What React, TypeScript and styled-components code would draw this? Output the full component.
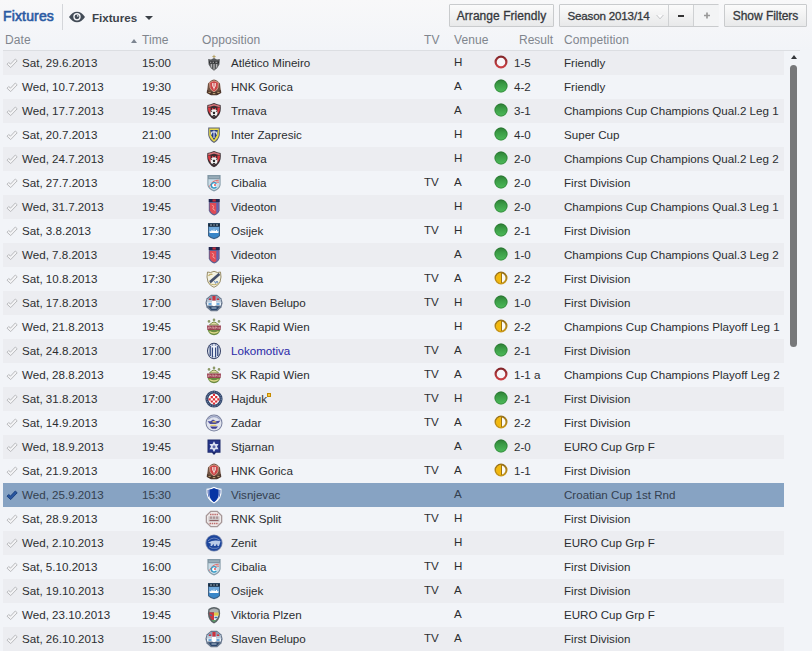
import React, { useState } from 'react';
import styled, { createGlobalStyle } from 'styled-components';

type Outcome = 'win' | 'draw' | 'loss';

interface Fixture {
  date: string;
  time: string;
  team: string;
  venue: 'H' | 'A';
  competition: string;
  tv?: boolean;
  outcome?: Outcome;
  score?: string;
}

interface LabelProps {
  spacing?: number;
}

const QUAL = 'Champions Cup Champions Qual.';
const PLAYOFF = 'Champions Cup Champions Playoff Leg ';
const LEAGUE = 'First Division';
const EURO = 'EURO Cup Grp F';

const fixtures: Fixture[] = [
  { date: 'Sat, 29.6.2013', time: '15:00', team: 'Atlético Mineiro', venue: 'H', outcome: 'loss', score: '1-5', competition: 'Friendly' },
  { date: 'Wed, 10.7.2013', time: '19:30', team: 'HNK Gorica', venue: 'A', outcome: 'win', score: '4-2', competition: 'Friendly' },
  { date: 'Wed, 17.7.2013', time: '19:45', team: 'Trnava', venue: 'A', outcome: 'win', score: '3-1', competition: `${QUAL}2 Leg 1` },
  { date: 'Sat, 20.7.2013', time: '21:00', team: 'Inter Zapresic', venue: 'H', outcome: 'win', score: '4-0', competition: 'Super Cup' },
  { date: 'Wed, 24.7.2013', time: '19:45', team: 'Trnava', venue: 'H', outcome: 'win', score: '2-0', competition: `${QUAL}2 Leg 2` },
  { date: 'Sat, 27.7.2013', time: '18:00', team: 'Cibalia', tv: true, venue: 'A', outcome: 'win', score: '2-0', competition: LEAGUE },
  { date: 'Wed, 31.7.2013', time: '19:45', team: 'Videoton', venue: 'H', outcome: 'win', score: '2-0', competition: `${QUAL}3 Leg 1` },
  { date: 'Sat, 3.8.2013', time: '17:30', team: 'Osijek', tv: true, venue: 'H', outcome: 'win', score: '2-1', competition: LEAGUE },
  { date: 'Wed, 7.8.2013', time: '19:45', team: 'Videoton', venue: 'A', outcome: 'win', score: '1-0', competition: `${QUAL}3 Leg 2` },
  { date: 'Sat, 10.8.2013', time: '17:30', team: 'Rijeka', tv: true, venue: 'A', outcome: 'draw', score: '2-2', competition: LEAGUE },
  { date: 'Sat, 17.8.2013', time: '17:00', team: 'Slaven Belupo', tv: true, venue: 'H', outcome: 'win', score: '1-0', competition: LEAGUE },
  { date: 'Wed, 21.8.2013', time: '19:45', team: 'SK Rapid Wien', venue: 'H', outcome: 'draw', score: '2-2', competition: `${PLAYOFF}1` },
  { date: 'Sat, 24.8.2013', time: '17:00', team: 'Lokomotiva', tv: true, venue: 'A', outcome: 'win', score: '2-1', competition: LEAGUE },
  { date: 'Wed, 28.8.2013', time: '19:45', team: 'SK Rapid Wien', tv: true, venue: 'A', outcome: 'loss', score: '1-1 a', competition: `${PLAYOFF}2` },
  { date: 'Sat, 31.8.2013', time: '17:00', team: 'Hajduk', tv: true, venue: 'H', outcome: 'win', score: '2-1', competition: LEAGUE },
  { date: 'Sat, 14.9.2013', time: '16:30', team: 'Zadar', tv: true, venue: 'A', outcome: 'draw', score: '2-2', competition: LEAGUE },
  { date: 'Wed, 18.9.2013', time: '19:45', team: 'Stjarnan', venue: 'A', outcome: 'win', score: '2-0', competition: EURO },
  { date: 'Sat, 21.9.2013', time: '16:00', team: 'HNK Gorica', tv: true, venue: 'A', outcome: 'draw', score: '1-1', competition: LEAGUE },
  { date: 'Wed, 25.9.2013', time: '15:30', team: 'Visnjevac', venue: 'A', competition: 'Croatian Cup 1st Rnd' },
  { date: 'Sat, 28.9.2013', time: '16:00', team: 'RNK Split', tv: true, venue: 'H', competition: LEAGUE },
  { date: 'Wed, 2.10.2013', time: '19:45', team: 'Zenit', venue: 'H', competition: EURO },
  { date: 'Sat, 5.10.2013', time: '16:00', team: 'Cibalia', tv: true, venue: 'H', competition: LEAGUE },
  { date: 'Sat, 19.10.2013', time: '15:30', team: 'Osijek', tv: true, venue: 'A', competition: LEAGUE },
  { date: 'Wed, 23.10.2013', time: '19:45', team: 'Viktoria Plzen', venue: 'A', competition: EURO },
  { date: 'Sat, 26.10.2013', time: '15:00', team: 'Slaven Belupo', tv: true, venue: 'A', competition: LEAGUE }
];

const SHIELD = 'M3 2 Q9 3.5 15 2 V9 Q15 15 9 17 Q3 15 3 9Z';

const crests: Record<string, React.ReactNode> = {
  'Atlético Mineiro': (
    <>
      <path d="M9 .5 9.7 2 11 2.2 10 3.2 9 4 8 3.2 7 2.2 8.3 2Z" fill="#b5a266" />
      <path d="M3.2 5 6 5.4 9 4 12 5.4 14.8 5 14.4 10.5 Q12.5 15 9 16.7 Q5.5 15 3.6 10.5Z" fill="#555759" />
      <path d="M4 7.4h10v2H4z" fill="#2c2d2f" />
      <path d="M5 8.3h1.4M7.6 8.3H9M10.4 8.3h2" stroke="#bbb" strokeWidth=".9" />
      <path d="M6.3 10v3.6M9 10v5.6M11.7 10v3.6" stroke="#c9c9c9" strokeWidth="1" />
    </>
  ),
  'HNK Gorica': (
    <>
      <path d="M5.5 3 Q9 0 12.5 3 L15 5.5 15.5 10 16.2 14.5 12 17 6 17 1.8 14.5 2.5 10 3 5.500Z" fill="#6f5040" />
      <path d="M2 12 5 13.500 13 13.500 16 12 16.200 15 12 17.300 6 17.300 1.800 15Z" fill="#4d372c" />
      <path d="M4.600 4.500 9 2.800 13.400 4.500 13 9.500 Q12 12.500 9 13.800 Q6 12.500 5 9.500Z" fill="#cc4447" stroke="#dcae98" strokeWidth=".8" />
      <path d="M7.6 5v3L9 10l1.400-2V5M9 5v6.500" stroke="#f4e4e1" strokeWidth=".9" fill="none" />
      <path d="M3.500 14.400h2.200M7.800 15.600h2.500M12.300 14.400h2.200" stroke="#c2a477" strokeWidth="1" />
    </>
  ),
  Trnava: (
    <>
      <path d="M2.4 3 5 2.4 9 1 13 2.4 15.6 3 Q16.4 9 14 13 Q12 16 9 17.3 Q6 16 4 13 Q1.6 9 2.4 3Z" fill="#3a2d31" />
      <path d="M2.900 5.500h2.700v7.300Q2.600 9 2.900 5.500ZM12.400 5.500h2.700q.3 4-2.700 7.300zM7 6h1.300v2H7zM9.800 6h1.300v2H9.800z" fill="#de3a42" />
      <path d="M3.200 4.600 9 2.800l5.800 1.800" stroke="#d8757a" strokeWidth="1.600" fill="none" />
      <circle cx="9" cy="10.800" r="3.500" fill="#f4f4f4" />
      <path d="m9 9.500 1.300 1-.5 1.500H8.200l-.5-1.500ZM6 8.800l1.300.3L6.300 10.300ZM12 8.800l-1.300.3 1 1.200ZM7.300 13.200l1.700-.5 1.700.5-1.700 1.100Z" fill="#222" />
    </>
  ),
  'Inter Zapresic': (
    <>
      <path d="M3.2 1.5h11.6V9Q14 14 9 17Q4 14 3.2 9Z" fill="#5d6375" />
      <path d="M4.2 2.5h9.6V9Q13 13 9 15.7Q5 13 4.2 9Z" fill="#e9db49" />
      <path d="M5.2 4h7.6L12 9l-3 5-3-5Z" fill="#263b82" />
      <path d="M9 4.5v7.500M6.500 6h5M6.800 6l-.3 2.500M11.200 6l.3 2.500" stroke="#f2f4ff" strokeWidth="1" />
    </>
  ),
  Cibalia: (
    <>
      <path d="M2.4 1h13.2v10Q15 15 9 17.5Q3 15 2.4 11Z" fill="#8298a6" />
      <path d="M3.4 5.2h11.2V11Q14 14.2 9 16.3Q4 14.2 3.4 11Z" fill="#c9dce7" />
      <path d="M4 3.1h10" stroke="#a9bcc6" strokeWidth="1" />
      <path d="M13.8 6.2Q7 6 4.500 12.6M14 8.2Q9 7 6.500 13.8" stroke="#e66c69" strokeWidth="1" fill="none" />
      <path d="M11.300 9.800A2.700 2.700 0 1 0 11.300 12.800" fill="#fff" stroke="#319cc8" strokeWidth="1.4" />
      <circle cx="10" cy="11" r="1" fill="#df555a" />
    </>
  ),
  Videoton: (
    <>
      <path d="M3.800 1h10.800v11.5Q13.4 16 9.2 17.5Q5 16 3.800 12.5Z" fill="#5c6091" />
      <path d="M3.800 1h10.800v3H3.800z" fill="#20284f" />
      <path d="M7.5 1.4h3.3v2.2H7.5z" fill="#c22b39" />
      <path d="M4.800 5h8.800v7.3q-1 2.9-4.4 4Q5.800 15.2 4.800 12.3Z" fill="#e04a55" />
      <path d="M11.300 4.8h2.300v7.5q-.7 1.800-2.300 2.900Z" fill="#5d66b5" />
      <path d="m6.800 7 2 1.200L7.800 11l2.400 1.5" stroke="#f29b97" strokeWidth="1" fill="none" />
    </>
  ),
  Osijek: (
    <>
      <path d="M3 1h12v13q-2 2.2-6 3.2Q5 16.2 3 14Z" fill="#3d6288" />
      <path d="M4 5h10v5H4z" fill="#6fa9dc" />
      <path d="M4.500 11V9.200h2V8h1v1h1l.5-2.500.5 2.500h1.500V8h1v1.200h1.500V11z" fill="#fff" />
      <path d="M4 11h10v2.6q-2 1.7-5 2.4-3-.7-5-2.4Z" fill="#3a86c8" />
      <path d="M3.200 1.5h11.600v3H3.200z" fill="#1b2c3f" />
      <path d="M5 3h2M8.3 3h1.5M11 3h2" stroke="#a3b8c8" strokeWidth="1" />
    </>
  ),
  Rijeka: (
    <>
      <path d="M2.5 2 5.5 2.5 9 1.3 12.5 2.5 15.5 2 16 7 15 12 Q13 16 9 17.3 Q5 16 3 12 L2 7Z" fill="#f3f1e2" stroke="#998e69" strokeWidth="1" />
      <path d="M13.8 2.8 15.2 5 5.6 13.4 4.2 11Z" fill="#45506b" />
      <path d="M3.5 6Q5 3.5 7.5 4.5" stroke="#c3b272" strokeWidth="1.3" fill="none" />
      <path d="m9.5 11 1.1 2.4L12 11l1 2" stroke="#6387bb" strokeWidth="1" fill="none" />
      <path d="M4 13q5 3.5 10 0" stroke="#c3b272" strokeWidth="1" fill="none" />
    </>
  ),
  'Slaven Belupo': (
    <>
      <path d="m6 .8 6 0 4.5 3.7L17.6 9l-1.2 4.6-4.2 3.6H5.8l-4.2-3.6L.4 9l1.1-4.5Z" fill="#68778d" />
      <path d="M6.2 2h5.6l3.8 3.3L16.5 9H1.5l.9-3.7Z" fill="#bac8d7" />
      <path d="M3 4.5 6 2h1.5v4H3zM10.5 2H12l3 2.5V6h-4.5z" fill="#8c9db5" />
      <path d="M7.4 2h3.2v4.5H7.4zM4 4.6h2v1.5H4zM12 4.6h2v1.5h-2z" fill="#cc3340" />
      <path d="M2 8.5h14v3H2z" fill="#e9f1f8" />
      <path d="M3.5 10h3M11.5 10h3" stroke="#4390cf" strokeWidth="1.3" />
      <path d="M7 7h4v4q-2 2.5-4 0z" fill="#fff" />
      <path d="M3.5 12.5h11l-2.8 3.6H6.3z" fill="#29476f" />
      <path d="M6.5 14h5" stroke="#d7e0ea" strokeWidth=".9" />
    </>
  ),
  'SK Rapid Wien': (
    <>
      <circle cx="4" cy="3.4" r="1.3" fill="#8d9a68" />
      <circle cx="9" cy="1.9" r="1.3" fill="#8d9a68" />
      <circle cx="14" cy="3.4" r="1.3" fill="#8d9a68" />
      <path d="M4.500 7Q9 1 13.500 7Z" fill="#e2daa6" stroke="#7c8f4b" strokeWidth="1" />
      <path d="M2.500 11.500h13Q14 17 9 17.3 4 17 2.500 11.500Z" fill="#6a8b40" />
      <path d="M4.500 13.500q4.500 3 9 0" stroke="#e0d98a" strokeWidth="1.3" fill="none" />
      <path d="M2 7.500h14l-.4 4.600H2.400z" fill="#9a4152" />
      <path d="M3.5 11V9h2v1H4M7 11V9h1.6v2M10 11.3V9h1.500v1H10M13 9v2M14.4 9v2" stroke="#dba8ac" strokeWidth=".7" fill="none" />
    </>
  ),
  Lokomotiva: (
    <>
      <ellipse cx="9" cy="9" rx="7" ry="8.3" fill="#303c61" />
      <ellipse cx="9" cy="9" rx="6" ry="7.3" fill="#dce3ef" />
      <path d="M5.2 4v10M7.5 2.5v13M10.5 2.5v13M12.8 4v10" stroke="#35497f" strokeWidth="1.3" />
      <path d="M8.2 4h1.600v10H8.200zM6.5 3.5h5v2h-5z" fill="#f1f4fa" />
    </>
  ),
  Hajduk: (
    <>
      <circle cx="9" cy="9" r="8.6" fill="#31456b" />
      <circle cx="9" cy="9" r="7.2" fill="none" stroke="#8e9fba" strokeWidth=".9" strokeDasharray="1.2 1.2" />
      <circle cx="9" cy="9" r="5.6" fill="#fff" />
      <path d="M7.9 3.8h2.2V6H7.9zM5.7 6h2.2v2.2H5.7zM10.1 6h2.2v2.2h-2.2zM3.6 8.2h2.1v2.2H3.6zM7.9 8.2h2.2v2.2H7.9zM12.3 8.2h2.1v2.2h-2.1zM5.7 10.4h2.2v2.2H5.7zM10.1 10.4h2.2v2.2h-2.2zM7.9 12.6h2.2v1.8H7.9z" fill="#dc2f35" />
    </>
  ),
  Zadar: (
    <>
      <circle cx="9" cy="9" r="8.5" fill="#777f9e" />
      <circle cx="9" cy="9" r="7.5" fill="#e1e4ee" />
      <path d="M3 5.2Q9-.2 15 5.2" stroke="#9ba4c4" strokeWidth="1.5" fill="none" />
      <path d="M2.5 7.2h3L8 5.5l3 1.7 4.5-.8-2 2.600-3 1H5z" fill="#4c4d9c" />
      <path d="M7.5 7h3l1 1.5h-4z" fill="#d5b762" />
      <path d="M5 12.6h8l-2 2.2H7z" fill="#3f3f91" />
      <path d="M5.500 11.300h6" stroke="#e3c64e" strokeWidth="1" />
    </>
  ),
  Stjarnan: (
    <>
      <path d="M2.5 1.5h13v13.3H11L9 17l-2-2.200H2.500Z" fill="#1d2a6b" />
      <path d="M3.5 2.5h11v11.3h-11z" fill="#26358a" />
      <path d="m9 3.3 1.5 2.7h3L12 8.6l1.5 2.700h-3L9 14l-1.5-2.700h-3L6 8.6 4.500 6h3Z" fill="#dce2f2" />
      <circle cx="9" cy="8.7" r="1.5" fill="#5d69a8" />
    </>
  ),
  Visnjevac: (
    <>
      <path d="M1.5 2.8Q5.5 2.7 9 .7q3.5 2 7.5 2.1Q17.5 13.5 9 17.6.5 13.5 1.500 2.800Z" fill="#fff" />
      <path d="M2.600 3.700h1V8q.2 4 2.300 6-3.700-3.400-3.300-10.300ZM15.400 3.700h-1V8q-.2 4-2.300 6 3.700-3.400 3.300-10.300Z" fill="#2c4ea8" />
      <path d="M4.300 3.500Q7 3 9 1.900q2 1.100 4.700 1.600V9q-.5 4.300-4.700 7.200Q4.800 13.300 4.300 9Z" fill="#0735a4" />
    </>
  ),
  'RNK Split': (
    <>
      <path d="M5.5.7h7l4.8 4.8v7l-4.8 4.8h-7L.7 12.5v-7Z" fill="#a69798" />
      <path d="M6 2h6l4 4v6l-4 4H6l-4-4V6Z" fill="#eee9e9" />
      <path d="M5 4.5h8M4.5 13.5h9" stroke="#bd6c6c" strokeWidth="1.5" strokeDasharray="1.5 .7" />
      <path d="M3.5 6.3h11v5.5h-11z" fill="#ccc5c6" />
      <path d="M6 6.5v2.3M9 6.500v2.300M12 6.500v2.300M4.500 10.500h9" stroke="#8d6064" strokeWidth="1" />
    </>
  ),
  Zenit: (
    <>
      <circle cx="9" cy="9" r="8.6" fill="#7d8bb0" />
      <circle cx="9" cy="9" r="7.7" fill="#1c459c" />
      <path d="M3 6.8Q9 1.5 14.8 6.4" stroke="#6984c2" strokeWidth="1" fill="none" />
      <path d="M3 8.800Q9 5 15.600 7.300L14 12H12.500L12 9.800 10.500 12H9L8.500 9.800 7 12H5.500L5.800 9.500Z" fill="#b9cbe8" />
      <path d="m4 12.800 3 1.500h5l2-1.500" stroke="#6380bd" strokeWidth="1" fill="none" />
    </>
  ),
  'Viktoria Plzen': (
    <>
      <path d="M3.5 3Q9-.8 14.5 3 16 9 13.5 13.5 11.5 16.8 9 17.6 6.5 16.8 4.5 13.5 2 9 3.5 3Z" fill="#5a6265" />
      <path d="M4.5 4Q9 1 13.5 4v2.2h-9z" fill="#aeb3b5" />
      <path d="M4.500 6.500H9V15Q4 12.500 4.500 6.500Z" fill="#cf3540" />
      <path d="M9 6.500h4.500Q14 12.500 9 15Z" fill="#eef0ee" />
      <path d="M9 6.500h4.500v3.200H9z" fill="#e0c748" />
      <path d="m5 8.500 2 1.200M9.500 11.500h3" stroke="#3b74a5" strokeWidth="1.300" />
      <path d="M6.500 14h5L9 16.300Z" fill="#5c9c68" />
    </>
  )
};

const Crest = ({ team }: { team: string }) => (
  <CrestSvg viewBox="0 0 18 18">{crests[team] ?? <path d={SHIELD} fill="#777" />}</CrestSvg>
);

const Tick = ({ active }: { active: boolean }) => (
  <TickSvg viewBox="0 0 12 12">
    <path
      d="M1 7.200 2.700 5.500 4.500 7.100 9.300 2 11.200 3.800 4.700 10.600Z"
      fill={active ? '#2856a0' : '#f4f4f6'}
      stroke={active ? '#1d427f' : '#b9babd'}
      strokeWidth="1"
      strokeLinejoin="round"
    />
  </TickSvg>
);

const ResultIcon = ({ outcome }: { outcome: Outcome }) => (
  <ResultSvg viewBox="0 0 14 14">
    {outcome === 'win' && (
      <>
        <circle cx="7" cy="7" r="6.5" fill="url(#win)" />
        <circle cx="7" cy="7" r="6.1" fill="none" stroke="#256b2d" strokeOpacity=".6" strokeWidth=".8" />
      </>
    )}
    {outcome === 'draw' && (
      <>
        <circle cx="7" cy="7" r="5.5" fill="#fbfaf5" stroke="url(#draw)" strokeWidth="2" />
        <path d="M7.4 1.8v10.400A5.200 5.200 0 0 1 7 1.800Z" fill="#f3b90e" />
        <path d="M7.5 2v10" stroke="#9d7512" strokeWidth="1" />
      </>
    )}
    {outcome === 'loss' && <circle cx="7" cy="7" r="5.400" fill="#f7f6f9" stroke="url(#loss)" strokeWidth="2.200" />}
  </ResultSvg>
);

function App() {
  const [selected, setSelected] = useState(18);

  return (
    <Page>
      <GlobalStyle />
      <Gradients>
        <linearGradient id="win" x2="0" y2="1">
          <stop stopColor="#2c7e34" />
          <stop offset=".4" stopColor="#3b9d46" />
          <stop offset="1" stopColor="#4dba59" />
        </linearGradient>
        <linearGradient id="draw" x2="0" y2="1">
          <stop stopColor="#96701a" />
          <stop offset="1" stopColor="#c89719" />
        </linearGradient>
        <linearGradient id="loss" x2="0" y2="1">
          <stop stopColor="#84262a" />
          <stop offset="1" stopColor="#cb4044" />
        </linearGradient>
      </Gradients>
      <Toolbar>
        <Title>Fixtures</Title>
        <ViewMenu>
          <EyeSvg viewBox="0 0 16 12">
            <path d="M0 6Q3.5.7 8 .7T16 6q-3.500 5.300-8 5.300T0 6Z" fill="#434c57" />
            <circle cx="8" cy="5.800" r="3.700" fill="#f5f6f8" />
            <circle cx="8" cy="5.800" r="2.400" fill="#434c57" />
            <circle cx="8.800" cy="4.900" r=".8" fill="#f5f6f8" />
          </EyeSvg>
          <ViewLabel>Fixtures</ViewLabel>
          <MenuArrow />
        </ViewMenu>
        <Actions>
          <Button width={105} spacing={0.05}>Arrange Friendly</Button>
          <ButtonGroup>
            <GroupButton width={109} spacing={-0.18}>
              Season 2013/14
              <ChevronSvg viewBox="0 0 8 6">
                <path d="M.6 1 4 4.800 7.400 1Z" fill="#fcfcfd" />
                <path d="M.6 1 4 4.800 7.400 1" fill="none" stroke="#b6b8bb" strokeWidth=".8" />
              </ChevronSvg>
            </GroupButton>
            <GroupButton width={25}>
              <SignSvg viewBox="0 0 8 8">
                <path d="M1 4h6" stroke="#333" strokeWidth="2" />
              </SignSvg>
            </GroupButton>
            <GroupButton width={25} faded>
              <SignSvg viewBox="0 0 8 8">
                <path d="M1 3.500h6M4 .5v6" stroke="#999" strokeWidth="1.700" />
              </SignSvg>
            </GroupButton>
          </ButtonGroup>
          <Button width={83} spacing={-0.05}>Show Filters</Button>
        </Actions>
      </Toolbar>
      <TableHeader>
        <DateHeader>
          Date
          <SortArrow />
        </DateHeader>
        <span>Time</span>
        <span>Opposition</span>
        <span>TV</span>
        <span>Venue</span>
        <ResultHeader>Result</ResultHeader>
        <span>Competition</span>
      </TableHeader>
      <TableArea>
        <Rows>
          {fixtures.map((item, index) => (
            <Row key={item.date} selected={index === selected} onClick={() => setSelected(index)}>
              <TickCell>
                <Tick active={index === selected} />
              </TickCell>
              <span>{item.date}</span>
              <span>{item.time}</span>
              <CrestCell>
                <Crest team={item.team} />
              </CrestCell>
              <TeamName link={item.team === 'Lokomotiva'}>
                {item.team}
                {item.team === 'Hajduk' && <RivalMark />}
              </TeamName>
              <RaisedCell>{item.tv && 'TV'}</RaisedCell>
              <RaisedCell>{item.venue}</RaisedCell>
              <ResultCell>{item.outcome && <ResultIcon outcome={item.outcome} />}</ResultCell>
              <span>{item.score}</span>
              <span>{item.competition}</span>
            </Row>
          ))}
        </Rows>
        <Scrollbar>
          <ScrollArrow />
          <ScrollThumb />
        </Scrollbar>
      </TableArea>
    </Page>
  );
}

const GlobalStyle = createGlobalStyle`
  * {
    box-sizing: border-box;
  }
  body {
    margin: 0;
    background: #f2f4f8;
    overflow: hidden;
  }
`;

const Page = styled.main`
  width: 812px;
  height: 651px;
  overflow: hidden;
  background: linear-gradient(#f8f8f9, #f2f4f8 50px);
  font-family: 'Liberation Sans', Arial, sans-serif;
  font-size: 11.6px;
  color: #2b2d30;
  white-space: nowrap;
`;

const Gradients = styled.svg`
  position: absolute;
  width: 0;
  height: 0;
`;

const Toolbar = styled.header`
  display: flex;
  height: 30px;
  padding: 4px 5px 0 3px;
`;

const Title = styled.h1`
  width: 60px;
  height: 26px;
  margin: 0;
  border-right: 1px solid #d4d6da;
  font-size: 14px;
  font-weight: normal;
  line-height: 25px;
  letter-spacing: 0.15px;
  color: #2c5ba3;
  -webkit-text-stroke: 0.6px #2c5ba3;
`;

const ViewMenu = styled.div`
  display: flex;
  align-items: center;
  height: 26px;
  padding-left: 6px;
`;

const EyeSvg = styled.svg`
  width: 16px;
  height: 12px;
`;

const ViewLabel = styled.span`
  width: 52px;
  padding-left: 7px;
  margin-right: 8px;
  font-size: 11.6px;
  font-weight: bold;
  color: #3c424a;
`;

const MenuArrow = styled.i`
  border: 4px solid transparent;
  border-top-color: #3b4047;
  border-bottom: 0;
  margin-top: 2px;
`;

const Actions = styled.div`
  display: flex;
  gap: 5px;
  height: 23px;
  margin-left: auto;
`;

const Button = styled.button.withConfig({
  shouldForwardProp: (prop) => !['width', 'spacing'].includes(prop)
})<LabelProps & { width: number }>`
  width: ${(props) => props.width}px;
  height: 23px;
  padding: 0;
  border: 1px solid #c9cbcd;
  border-radius: 1px;
  background: linear-gradient(#fbfbfb, #e8e9ea);
  font-family: inherit;
  font-size: 12px;
  letter-spacing: ${(props) => props.spacing ?? 0}px;
  color: #35383c;
  -webkit-text-stroke: 0.3px #35383c;
`;

const ButtonGroup = styled.div`
  display: flex;
  width: 160px;
  border: 1px solid #c9cbcd;
  border-radius: 1px;
`;

const GroupButton = styled.button.withConfig({
  shouldForwardProp: (prop) => !['width', 'spacing', 'faded'].includes(prop)
})<LabelProps & { width: number; faded?: boolean }>`
  display: flex;
  align-items: center;
  justify-content: center;
  gap: 7px;
  flex: 0 0 ${(props) => props.width}px;
  padding: 0 0 0 ${(props) => (props.spacing ? 4 : 0)}px;
  border: 0;
  border-right: ${(props) => (props.faded ? 0 : 1)}px solid #cfd1d3;
  background: ${(props) => (props.faded ? '#f3f4f5' : 'linear-gradient(#fbfbfb, #e8e9ea)')};
  font-family: inherit;
  font-size: 11.6px;
  letter-spacing: ${(props) => props.spacing ?? 0}px;
  color: #35383c;
  -webkit-text-stroke: 0.3px #35383c;
`;

const ChevronSvg = styled.svg`
  width: 8px;
  height: 6px;
  margin-top: 3px;
`;

const SignSvg = styled.svg`
  width: 8px;
  height: 8px;
`;

const TableHeader = styled.div`
  display: grid;
  grid-template-columns: 137px 60px 222px 30px 65px 45px auto;
  width: 797px;
  height: 21px;
  margin-left: 3px;
  padding-left: 2px;
  border-bottom: 1px solid #dcdee2;
  font-size: 12px;
  line-height: 20px;
  letter-spacing: 0.1px;
  color: #80858d;
`;

const DateHeader = styled.span`
  display: flex;
  align-items: center;
  justify-content: space-between;
  padding-right: 5px;
`;

const SortArrow = styled.i`
  border: 3.5px solid transparent;
  border-bottom: 4px solid #7d8591;
  border-top: 0;
  margin-top: 2px;
`;

const ResultHeader = styled.span`
  letter-spacing: 0;
`;

const TableArea = styled.div`
  display: flex;
  padding-left: 3px;
`;

const Rows = styled.div`
  width: 781px;
`;

const Row = styled.div.withConfig({
  shouldForwardProp: (prop) => prop !== 'selected'
})<{ selected: boolean }>`
  display: grid;
  grid-template-columns: 19px 120px 60px 29px 193px 30px 39px 21px 50px auto;
  height: 24px;
  line-height: 24px;
  color: ${(props) => (props.selected ? '#33404f' : 'inherit')};

  &:nth-child(odd) {
    background: #ecedf1;
  }
  &:nth-child(n) {
    ${(props) => props.selected && 'background: #87a3c3;'}
  }
`;

const TickCell = styled.span`
  display: flex;
  align-items: center;
  padding-left: 3px;
`;

const TickSvg = styled.svg`
  width: 12px;
  height: 12px;
`;

const CrestCell = styled.span`
  display: flex;
  align-items: center;
  padding-left: 3px;
`;

const CrestSvg = styled.svg`
  width: 18px;
  height: 18px;
`;

const TeamName = styled.span.withConfig({
  shouldForwardProp: (prop) => prop !== 'link'
})<{ link: boolean }>`
  display: flex;
  color: ${(props) => (props.link ? '#2929a8' : 'inherit')};
`;

const RivalMark = styled.i`
  width: 4px;
  height: 4px;
  margin-top: 6px;
  border: 1px solid #c58a00;
  background: #f6cb45;
`;

const RaisedCell = styled.span`
  line-height: 22px;
`;

const ResultCell = styled.span`
  display: flex;
  align-items: center;
  height: 22px;
  padding-left: 0.5px;
`;

const ResultSvg = styled.svg`
  width: 14px;
  height: 14px;
`;

const Scrollbar = styled.div`
  display: flex;
  flex-direction: column;
  align-items: center;
  width: 7px;
  margin-left: 6px;
  padding-top: 4px;
`;

const ScrollArrow = styled.i`
  border: 3.5px solid transparent;
  border-bottom: 4px solid #33363a;
  border-top: 0;
`;

const ScrollThumb = styled.div`
  width: 7px;
  height: 282px;
  margin-top: 6px;
  border-radius: 4px;
  background: #77787a;
`;

export default App;
